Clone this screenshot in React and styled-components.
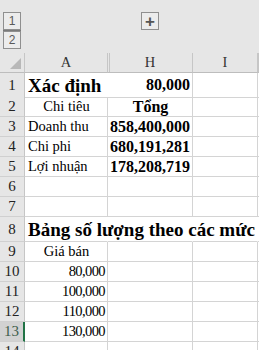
import styled, { createGlobalStyle } from 'styled-components';

const SERIF = '"Liberation Serif", "Times New Roman", "DejaVu Serif", serif';

const GlobalStyle = createGlobalStyle`
  html, body {
    margin: 0;
    padding: 0;
    background: #ffffff;
    overflow: hidden;
  }
  body, #root {
    font-family: ${SERIF};
  }
`;

const COLS = '25px 83px 85px 65px 1fr';

const Page = styled.div`
  width: 259px;
  height: 350px;
  overflow: hidden;
  display: flex;
  flex-direction: column;
  font-family: ${SERIF};
`;

const OutlineBar = styled.div`
  height: 53px;
  flex-shrink: 0;
  background: #e6e6e6;
  display: flex;
  align-items: flex-start;
  padding: 12px 0 0 3px;
  box-sizing: border-box;
`;

const LevelStack = styled.div`
  display: flex;
  flex-direction: column;
`;

const LevelButton = styled.div`
  width: 18px;
  height: 18px;
  box-sizing: border-box;
  border: 1px solid #8f8f8f;
  display: flex;
  align-items: center;
  justify-content: center;
  font-family: "Liberation Sans", Arial, sans-serif;
  font-size: 12px;
  color: #5a5a5a;
  background: #ececec;
  & + & {
    margin-top: 1px;
    box-shadow: 0 -1px 0 #7a7a7a;
  }
`;

const ExpandButton = styled(LevelButton)`
  margin-left: 120px;
  font-size: 17px;
  font-weight: bold;
  color: #555555;
  line-height: 1;
`;

const Row = styled.div`
  display: grid;
  grid-template-columns: ${COLS};
  height: ${p => p.$h || 20}px;
  flex-shrink: 0;
`;

const Corner = styled.div`
  background: #e6e6e6;
  border-right: 1px solid #c6c6c6;
  border-bottom: 1px solid #bdbdbd;
  box-sizing: border-box;
  display: flex;
  align-items: flex-end;
  justify-content: flex-end;
  padding: 0 3px 3px 0;
`;

const Triangle = styled.div`
  width: 0;
  height: 0;
  border-left: 11px solid transparent;
  border-bottom: 11px solid #b8b8b8;
`;

const ColHead = styled.div`
  background: #e6e6e6;
  border-right: 1px solid #c6c6c6;
  border-bottom: 1px solid #bdbdbd;
  box-sizing: border-box;
  display: flex;
  align-items: center;
  justify-content: center;
  font-family: ${SERIF};
  font-size: 14.5px;
  color: #333333;
  background-image: ${p => p.$hiddenBefore
    ? 'linear-gradient(to right, transparent 1px, #c6c6c6 1px, #c6c6c6 2px, transparent 2px)'
    : 'none'};
`;

const RowHead = styled.div`
  background: ${p => p.$active ? '#d2d2d2' : '#e6e6e6'};
  border-right: ${p => p.$active ? '2px solid #217346' : '1px solid #c6c6c6'};
  border-bottom: 1px solid #d0d0d0;
  box-sizing: border-box;
  display: flex;
  align-items: center;
  justify-content: center;
  font-family: ${SERIF};
  font-size: 15px;
  color: ${p => p.$active ? '#3d5e4c' : '#222222'};
`;

const Cell = styled.div`
  position: relative;
  box-sizing: border-box;
  border-right: ${p => p.$open ? '1px solid transparent' : '1px solid #d4d4d4'};
  border-bottom: 1px solid #d4d4d4;
  display: flex;
  align-items: center;
  justify-content: ${p => p.$align === 'right' ? 'flex-end' : p.$align === 'center' ? 'center' : 'flex-start'};
  padding: 0 2px 0 3px;
  font-family: ${SERIF};
  font-size: ${p => p.$size || 14.5}px;
  font-weight: ${p => p.$bold ? 'bold' : 'normal'};
  letter-spacing: ${p => p.$tight ? '-0.6px' : 'normal'};
  color: #000000;
  white-space: nowrap;
  overflow: ${p => p.$spill ? 'visible' : 'hidden'};
  z-index: ${p => p.$spill ? 2 : 'auto'};

  ${p => p.$box && `
    &::after {
      content: '';
      position: absolute;
      top: -1px;
      left: -1px;
      right: -1px;
      bottom: -1px;
      border: 1px solid #000000;
      pointer-events: none;
    }
  `}
`;

const Title = styled.span`
  font-family: ${SERIF};
  font-size: 19px;
  font-weight: bold;
  padding-top: 2px;
`;

const summary = [
  ['Doanh thu', '858,400,000'],
  ['Chi phi', '680,191,281'],
  ['Lợi nhuận', '178,208,719'],
];

const prices = ['80,000', '100,000', '110,000', '130,000'];

const Blank = ({ n }) => Array.from({ length: n }, (_, i) => <Cell key={`b${i}`} />);

export default function App() {
  return (
    <Page>
      <GlobalStyle />
      <OutlineBar>
        <LevelStack>
          <LevelButton>1</LevelButton>
          <LevelButton>2</LevelButton>
        </LevelStack>
        <ExpandButton>+</ExpandButton>
      </OutlineBar>

      <Row $h={20}>
        <Corner><Triangle /></Corner>
        <ColHead>A</ColHead>
        <ColHead $hiddenBefore>H</ColHead>
        <ColHead>I</ColHead>
        <ColHead />
      </Row>

      <Row $h={24}>
        <RowHead>1</RowHead>
        <Cell $open $spill><Title>Xác định</Title></Cell>
        <Cell $align="right" $bold $size={16}>80,000</Cell>
        <Blank n={2} />
      </Row>

      <Row>
        <RowHead>2</RowHead>
        <Cell $box $align="center">Chi tiêu</Cell>
        <Cell $box $align="center" $bold $size={16}>Tổng</Cell>
        <Blank n={2} />
      </Row>

      {summary.map(([label, value], i) => (
        <Row key={label}>
          <RowHead>{i + 3}</RowHead>
          <Cell $box>{label}</Cell>
          <Cell $box $align="right" $bold $size={16}>{value}</Cell>
          <Blank n={2} />
        </Row>
      ))}

      {[6, 7].map(n => (
        <Row key={n}>
          <RowHead>{n}</RowHead>
          <Blank n={4} />
        </Row>
      ))}

      <Row $h={25}>
        <RowHead>8</RowHead>
        <Cell $open $spill><Title>Bảng số lượng theo các mức giá</Title></Cell>
        <Cell $open />
        <Cell $open />
        <Cell />
      </Row>

      <Row>
        <RowHead>9</RowHead>
        <Cell $box $align="center">Giá bán</Cell>
        <Blank n={3} />
      </Row>

      {prices.map((p, i) => (
        <Row key={p}>
          <RowHead $active={i === 3}>{i + 10}</RowHead>
          <Cell $box $align="right" $tight>{p}</Cell>
          <Blank n={3} />
        </Row>
      ))}

      <Row $h={20}>
        <RowHead>14</RowHead>
        <Blank n={4} />
      </Row>
    </Page>
  );
}
